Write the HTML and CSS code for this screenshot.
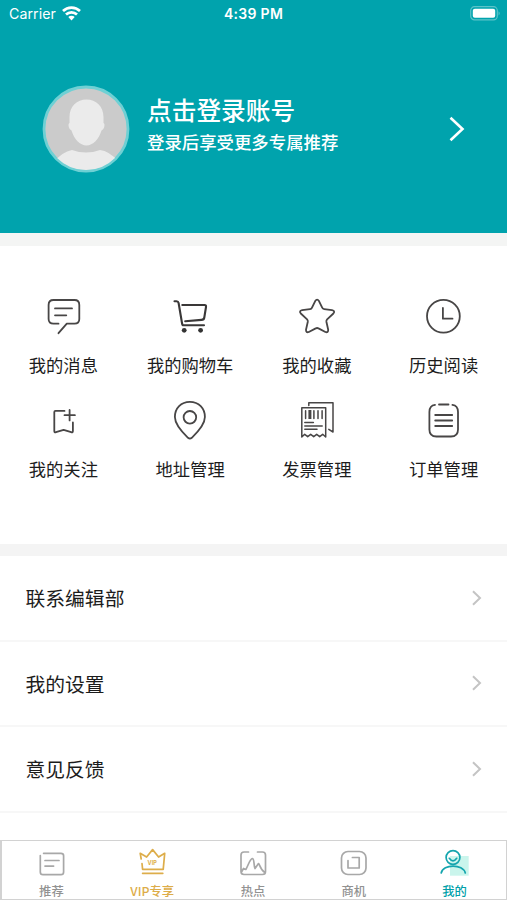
FILE: index.html
```html
<!DOCTYPE html>
<html lang="zh-CN">
<head>
<meta charset="utf-8">
<title>我的</title>
<link rel="stylesheet" href="styles.css">
</head>
<body>
<div class="app">
  <header class="hero">
    <div class="status">
      <div class="carrier"><span>Carrier</span>
        <svg width="19" height="15" viewBox="0 0 19 15" fill="none" stroke="#fff" stroke-width="2.7"><path d="M1 5.100a12.300 12.300 0 0 1 17 0M4 8.600a8 8 0 0 1 11 0"/><path d="M6.300 11.100a4.600 4.600 0 0 1 6.400 0l-3.200 3.300z" fill="#fff" stroke="none"/></svg>
      </div>
      <div class="time">4:39 PM</div>
      <svg class="battery" width="31" height="15" viewBox="0 0 31 15"><rect x=".7" y=".7" width="26.6" height="13.2" rx="3.8" fill="none" stroke="#5cc3c9" stroke-width="1.2"/><rect x="2.800" y="2.800" width="22.400" height="9" rx="2" fill="#fff"/><path d="M28.600 5.200q2 2 0 4.400z" fill="#68c8cd"/></svg>
    </div>
    <div class="profile">
      <svg class="avatar" width="88" height="88" viewBox="0 0 88 88"><defs><clipPath id="face"><circle cx="44" cy="44" r="41"/></clipPath></defs><circle cx="44" cy="44" r="42" fill="#cbcbcb" stroke="#6fd0d4" stroke-width="2.800"/><g clip-path="url(#face)" fill="#ebebeb"><path d="M44.500 14.500C35 14.500 27.500 21.500 27.500 32V38Q26 38.500 26.800 42Q27.500 45 29.500 45.500C32 54 38 60.500 44.500 60.500S57 54 59.500 45.500Q61.500 45 62.200 42Q63 38.500 61.500 38V32C61.500 21.500 54 14.500 44.500 14.500Z"/><path d="M12 77Q20 67 30 65Q44 70 58 65Q67 66 76 76V88H12Z"/></g></svg>
      <div class="login"><div class="title">点击登录账号</div><div class="subtitle">登录后享受更多专属推荐</div></div>
      <svg class="go" width="16" height="26" viewBox="0 0 16 26" fill="none" stroke="#fff" stroke-width="2.600"><path d="M1.500 1.800 13.500 13 1.500 24.200"/></svg>
    </div>
  </header>

  <main>
    <section class="grid">
      <div class="item"><svg viewBox="0 0 40 40"><path d="M15.500 27.700H10.500Q5.600 27.700 5.600 23V9Q5.600 4 10.500 4H31.500Q36.300 4 36.300 9V23Q36.300 27.700 31.500 27.700H23.800L15.500 37.200M12 12.400H29M12 19.300H23.300"/></svg><span>我的消息</span></div>
      <div class="item"><svg class="cart" viewBox="0 0 40 40"><path d="M4.500 5.300H6.500Q8.300 5.300 8.600 7L12 27Q12.300 29.300 13.500 29.300H34M12.300 9H34.500Q36.300 9 36 11L34.300 21.500Q34 23.800 31.500 23.900L15.200 25.200"/><circle class="solid" cx="14.200" cy="34.300" r="2.400"/><circle class="solid" cx="30.600" cy="34.300" r="2.400"/></svg><span>我的购物车</span></div>
      <div class="item"><svg viewBox="0 0 40 40"><path d="M18.200 5.100Q20.100 2.300 22 5.100L25.200 11.700Q25.800 13 27.200 13.200L35 14.200Q38.500 15 36.400 17.500L30.100 23.400Q29.200 24.300 29.400 25.700L31.200 33.800Q31.200 37 28.400 36L21.500 32.400Q20.100 31.600 18.700 32.400L11.800 36Q9 37 9 33.800L10.800 25.700Q11 24.300 10.100 23.400L3.800 17.500Q1.700 15 5.200 14.200L13 13.200Q14.400 13 15 11.700Z"/></svg><span>我的收藏</span></div>
      <div class="item"><svg viewBox="0 0 40 40"><circle cx="19.400" cy="20.300" r="16.400"/><path d="M18.900 12V22.700H28.500"/></svg><span>历史阅读</span></div>
      <div class="item"><svg viewBox="0 0 40 40"><path d="M21.500 10.900H12.500Q11.300 10.900 11.300 12.100V31Q11.300 32.900 13 32.200L20.600 29.800 28.200 32.200Q29.900 32.900 29.900 31V22.500M26.600 10V20.400M21.500 15.200H31.900"/></svg><span>我的关注</span></div>
      <div class="item"><svg viewBox="0 0 40 40"><path d="M19.900 1.900C11 1.900 4.900 8.400 4.900 17C4.900 25 12.500 32.500 18 37.800Q19.900 39.300 21.800 37.800C27.300 32.500 34.900 25 34.900 17C34.900 8.400 28.800 1.900 19.900 1.900Z"/><circle cx="19.900" cy="17.300" r="6.300"/></svg><span>地址管理</span></div>
      <div class="item"><svg class="invoice" viewBox="0 0 40 40"><path d="M11.800 5.400V2.700H36V32L31.800 29.300M4.800 37V7.700H28.700V37L25.700 34.300 22.700 36.700 19.700 34.300 16.700 36.700 13.700 34.300 10.700 36.700 7.700 34.300ZM8.600 10.700V18.500M16.900 10.700V18.500M21 10.700V18.500M25.100 10.700V18.500M7.800 22.500H16.400M7.800 26H25.200M7.800 29.300H20"/><path class="bar" d="M12.900 10V19"/></svg><span>发票管理</span></div>
      <div class="item"><svg viewBox="0 0 40 40"><path d="M11 4.900Q5.400 5.600 5.400 12V29.500Q5.400 36.500 12.400 36.500H27Q34 36.500 34 29.500V12Q34 5.600 28.400 4.900M15 4.500H24.500M11.200 15H28.200M11.200 20.500H28.200M11.200 26H28.200"/></svg><span>订单管理</span></div>
    </section>
    <section class="list">
      <div class="row"><span>联系编辑部</span><svg viewBox="0 0 10 16"><path d="M1 1.200 8 8 1 14.800"/></svg></div>
      <div class="row"><span>我的设置</span><svg viewBox="0 0 10 16"><path d="M1 1.200 8 8 1 14.800"/></svg></div>
      <div class="row"><span>意见反馈</span><svg viewBox="0 0 10 16"><path d="M1 1.200 8 8 1 14.800"/></svg></div>
    </section>
  </main>

  <nav class="tabs">
    <div class="tab"><svg viewBox="0 0 32 32"><path d="M5.300 8.500V25Q5.300 27.700 8 27.700H26Q28.600 27.700 28.600 25V8.800Q28.600 6.300 26 6.300H8.600M10 13.500H24M10 19.100H18.600"/></svg><span>推荐</span></div>
    <div class="tab vip"><svg viewBox="0 0 32 32"><path d="M5.200 12 4.200 6.300 10.600 10 16.600 2.600 22.600 10 28.700 6.300 27.200 22.300H6.600L6 16.500M6.600 26.300H26.800"/><text x="16.200" y="17.800">VIP</text></svg><span>VIP专享</span></div>
    <div class="tab"><svg viewBox="0 0 32 32"><path d="M11.500 5H7Q4 5 4 8V24.500Q4 27.500 7 27.500H25.500Q28.500 27.500 28.500 24.500V8Q28.500 5 25.500 5H20.500M4.500 25 6.500 21.500 8.800 22.500C11.500 18 12.500 12.500 15.300 11.500C17.500 11.500 16.500 18 18 21.500L21.500 16.500C22.800 17 23 22.500 27.800 25.500"/></svg><span>热点</span></div>
    <div class="tab"><svg viewBox="0 0 32 32"><rect x="3.500" y="4.500" width="24.500" height="23" rx="6.500"/><path d="M14.400 10.500H21.200V21H10V13.500"/></svg><span>商机</span></div>
    <div class="tab active"><svg viewBox="0 0 32 32"><path class="mint" d="M11 9H29.700V28.700H11Z"/><circle cx="14" cy="10.500" r="6.900"/><path d="M10.300 11.300Q14 16.400 17.700 11.300M2.200 26C4 16.800 24 16.800 26.300 26"/></svg><span>我的</span></div>
  </nav>
</div>
</body>
</html>
```
FILE: styles.css
```css
* { box-sizing: border-box; }
body { margin: 0; background: #fff; font-family: "Noto Sans CJK SC", sans-serif; color: #1c1c1c; }
svg { display: block; flex: none; }
.app { width: 507px; height: 900px; display: flex; flex-direction: column; overflow: hidden; }
.hero { height: 233px; background: #00a3ad; color: #fff; flex: none; }
.status { height: 28px; padding: 0 6px 0 9px; display: grid; grid-template-columns: 1fr auto 1fr; align-items: center; font: 14.2px/28px Inter, sans-serif; }
.carrier { display: flex; align-items: center; gap: 6px; letter-spacing: .05px; }
.carrier svg { margin-top: -2px; }
.time { font-weight: 600; font-size: 14px; letter-spacing: .3px; margin: 0 3px 0 0; }
.battery { justify-self: end; margin-top: -1px; }
.profile { margin-top: 57px; padding: 0 42px; display: flex; align-items: center; height: 88px; }
.login { margin-left: 17px; flex: 1; padding-bottom: 10px; }
.title { font-size: 24.7px; line-height: 35px; font-weight: 500; }
.subtitle { font-size: 17.4px; line-height: 29px; font-weight: 500; }
main { flex: 1; min-height: 0; }
.grid { height: 323px; border-top: 13px solid #f4f5f4; border-bottom: 12px solid #f4f4f4; padding-top: 50px; display: grid; grid-template-columns: repeat(4, 1fr); grid-auto-rows: 104px; align-content: start; }
.item { display: flex; flex-direction: column; align-items: center; font-size: 17.3px; line-height: 26px; gap: 16px; }
.item svg { width: 40px; height: 40px; fill: none; stroke: #484646; stroke-width: 1.8; stroke-linecap: round; stroke-linejoin: round; }
.item .cart { stroke-width: 2.1; stroke: #3a3838; }
.item .invoice { stroke-width: 1.5; }
.item .solid { fill: #333; stroke: none; }
.item .bar { stroke-width: 3; stroke-linecap: butt; }
.row { height: 85.5px; border-bottom: 2px solid #f7f7f7; padding: 0 25px 0 25.5px; display: flex; align-items: center; justify-content: space-between; font-size: 19.8px; }
.row svg { width: 10px; height: 16px; fill: none; stroke: #c4c4c4; stroke-width: 2; }
.tabs { height: 60px; flex: none; border: 1px solid #d2d2d2; border-left-width: 2px; background: #fff; display: grid; grid-template-columns: repeat(5, 1fr); color: #929292; }
.tab { display: flex; flex-direction: column; align-items: center; padding: 6px 2px 0 0; font-size: 12.3px; line-height: 20px; font-weight: 500; gap: 2px; }
.tab svg { width: 32px; height: 32px; fill: none; stroke: #a8a8a8; stroke-width: 1.7; stroke-linecap: round; stroke-linejoin: round; }
.tab.vip svg { stroke: #ddad4a; }
.vip { color: #ddad4a; }
.vip text { font: bold 5.5px Inter, sans-serif; fill: #ddad4a; stroke: none; text-anchor: middle; }
.active { color: #009fa9; }
.tab.active svg { stroke: #14a5ae; }
.active .mint { fill: #caf5ec; stroke: none; }
```
